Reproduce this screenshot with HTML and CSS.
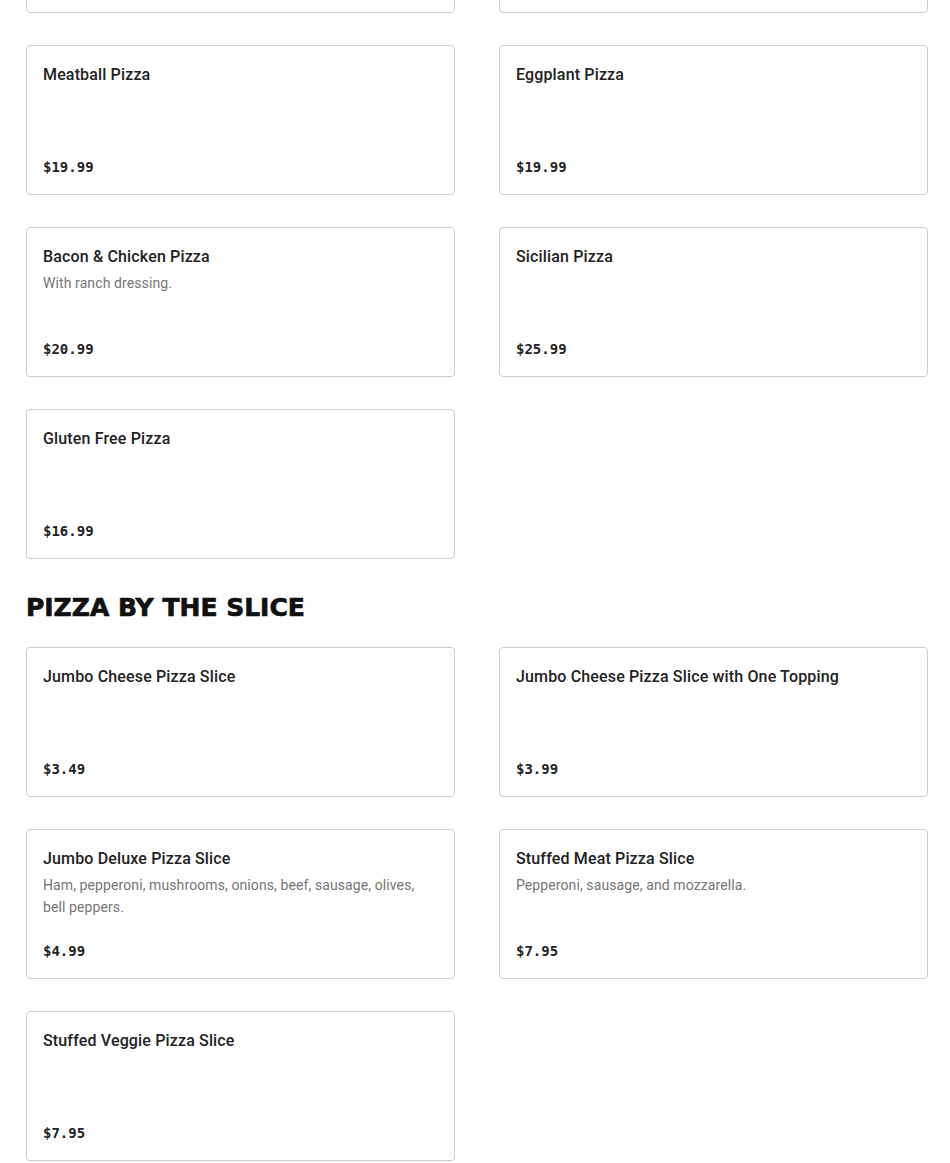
FILE: index.html
```
<!DOCTYPE html>
<html lang="en">
<head>
<meta charset="utf-8">
<title>Menu</title>
<link rel="stylesheet" href="styles.css">
</head>
<body>
<main class="menu">
  <section class="section section-first">
    <div class="grid grid-cut">
      <div class="card"></div>
      <div class="card"></div>
      <div class="card">
        <h3 class="item-name">Meatball Pizza</h3>
        <p class="item-price">$19.99</p>
      </div>
      <div class="card">
        <h3 class="item-name">Eggplant Pizza</h3>
        <p class="item-price">$19.99</p>
      </div>
      <div class="card">
        <h3 class="item-name">Bacon &amp; Chicken Pizza</h3>
        <p class="item-desc">With ranch dressing.</p>
        <p class="item-price">$20.99</p>
      </div>
      <div class="card">
        <h3 class="item-name">Sicilian Pizza</h3>
        <p class="item-price">$25.99</p>
      </div>
      <div class="card">
        <h3 class="item-name">Gluten Free Pizza</h3>
        <p class="item-price">$16.99</p>
      </div>
    </div>
  </section>
  <section class="section">
    <h2 class="section-title">PIZZA BY THE SLICE</h2>
    <div class="grid">
      <div class="card">
        <h3 class="item-name">Jumbo Cheese Pizza Slice</h3>
        <p class="item-price">$3.49</p>
      </div>
      <div class="card">
        <h3 class="item-name">Jumbo Cheese Pizza Slice with One Topping</h3>
        <p class="item-price">$3.99</p>
      </div>
      <div class="card">
        <h3 class="item-name">Jumbo Deluxe Pizza Slice</h3>
        <p class="item-desc">Ham, pepperoni, mushrooms, onions, beef, sausage, olives, bell peppers.</p>
        <p class="item-price">$4.99</p>
      </div>
      <div class="card">
        <h3 class="item-name">Stuffed Meat Pizza Slice</h3>
        <p class="item-desc">Pepperoni, sausage, and mozzarella.</p>
        <p class="item-price">$7.95</p>
      </div>
      <div class="card">
        <h3 class="item-name">Stuffed Veggie Pizza Slice</h3>
        <p class="item-price">$7.95</p>
      </div>
    </div>
  </section>
</main>
</body>
</html>
```
FILE: styles.css
```
html, body {
  margin: 0;
  padding: 0;
  background: #ffffff;
}

body {
  font-family: Roboto, "Liberation Sans", Arial, sans-serif;
  color: #222222;
  overflow: hidden;
}

.menu {
  padding: 0 22px 0 26px;
}

.section-first {
  margin-top: -137px;
}

.section-title {
  margin: 33px 0 23px;
  font-family: "DejaVu Sans", "Liberation Sans", sans-serif;
  font-weight: 700;
  font-size: 25px;
  line-height: 32px;
  letter-spacing: 0;
  -webkit-text-stroke: 0.7px #111111;
  color: #111111;
}

.grid {
  display: grid;
  grid-template-columns: 429px 429px;
  column-gap: 44px;
  row-gap: 32px;
}

.card {
  box-sizing: border-box;
  height: 150px;
  border: 1px solid #cccccc;
  border-radius: 4px;
  padding: 16px;
  display: flex;
  flex-direction: column;
  background: #ffffff;
}

.item-name {
  margin: 0 0 2px;
  font-size: 16px;
  font-weight: 500;
  line-height: 26px;
  letter-spacing: 0.15px;
  color: #222222;
}

.item-desc {
  margin: 0;
  font-size: 14px;
  line-height: 22px;
  letter-spacing: 0.1px;
  color: #767676;
}

.item-price {
  margin: auto 0 2px;
  font-family: "DejaVu Sans Mono", "Liberation Mono", monospace;
  font-weight: 700;
  font-size: 14px;
  line-height: 18px;
  color: #222222;
}
```
